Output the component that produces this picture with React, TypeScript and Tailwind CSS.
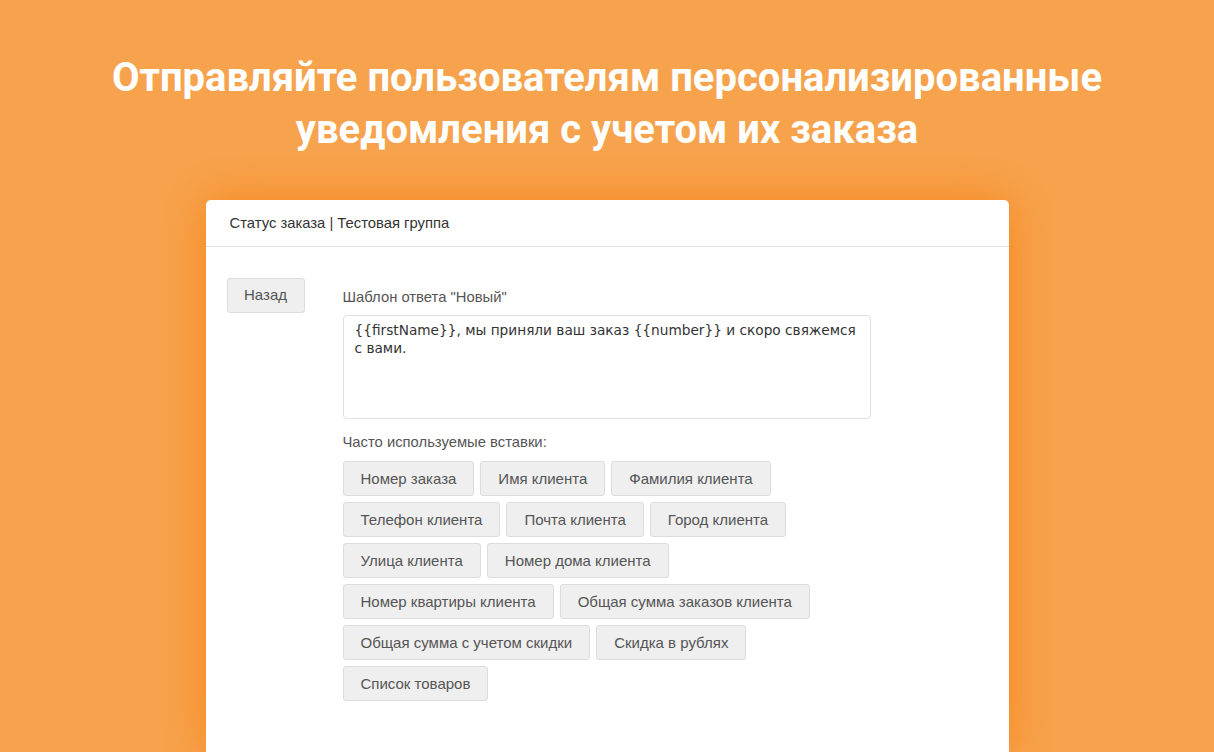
const inserts = [
  "Номер заказа",
  "Имя клиента",
  "Фамилия клиента",
  "Телефон клиента",
  "Почта клиента",
  "Город клиента",
  "Улица клиента",
  "Номер дома клиента",
  "Номер квартиры клиента",
  "Общая сумма заказов клиента",
  "Общая сумма с учетом скидки",
  "Скидка в рублях",
  "Список товаров",
];

export default function App() {
  return (
    <div className="h-[752px] w-full overflow-hidden bg-[#f7a34d] flex flex-col items-center">
      <h1 className="pt-[52px] text-center text-white font-bold text-[40px] leading-[52px] font-['Roboto',sans-serif]">
        Отправляйте пользователям персонализированные
        <br />
        уведомления с учетом их заказа
      </h1>

      <div className="mt-[44px] w-[803px] flex-1 bg-white rounded-t-[5px] shadow-[0_0_45px_rgba(246,128,18,0.85)] font-['Liberation_Sans',Arial,sans-serif]">
        <div className="h-[47px] flex items-center px-6 border-b border-[#e3e3e3] text-[14.8px] text-[#333]">
          Статус заказа | Тестовая группа
        </div>

        <div className="flex pt-[31px] pl-[21px]">
          <button className="w-[78px] h-[35px] shrink-0 rounded-[3px] border border-[#dcdcdc] bg-[#efefef] text-[15px] text-[#555]">
            Назад
          </button>

          <div className="ml-[38px] pt-[9px] flex flex-col">
            <div className="text-[14.8px] leading-[20px] text-[#555]">Шаблон ответа "Новый"</div>
            <div className="mt-[8px] w-[528px] h-[104px] rounded-[4px] border border-[#e0e0e0] px-[11px] pt-[5px] text-[13.7px] leading-[18px] text-[#333] font-['DejaVu_Sans',sans-serif]">
              {"{{firstName}}, мы приняли ваш заказ {{number}} и скоро свяжемся с вами."}
            </div>

            <div className="mt-[13px] text-[14.8px] leading-[20px] text-[#555]">Часто используемые вставки:</div>

            <div className="mt-[9px] w-[480px] flex flex-wrap gap-[6px]">
              {inserts.map((item) => (
                <button
                  key={item}
                  className="h-[35px] px-[17px] pt-[2px] rounded-[3px] border border-[#dcdcdc] bg-[#efefef] text-[15px] text-[#555] whitespace-nowrap"
                >
                  {item}
                </button>
              ))}
            </div>
          </div>
        </div>
      </div>
    </div>
  );
}
